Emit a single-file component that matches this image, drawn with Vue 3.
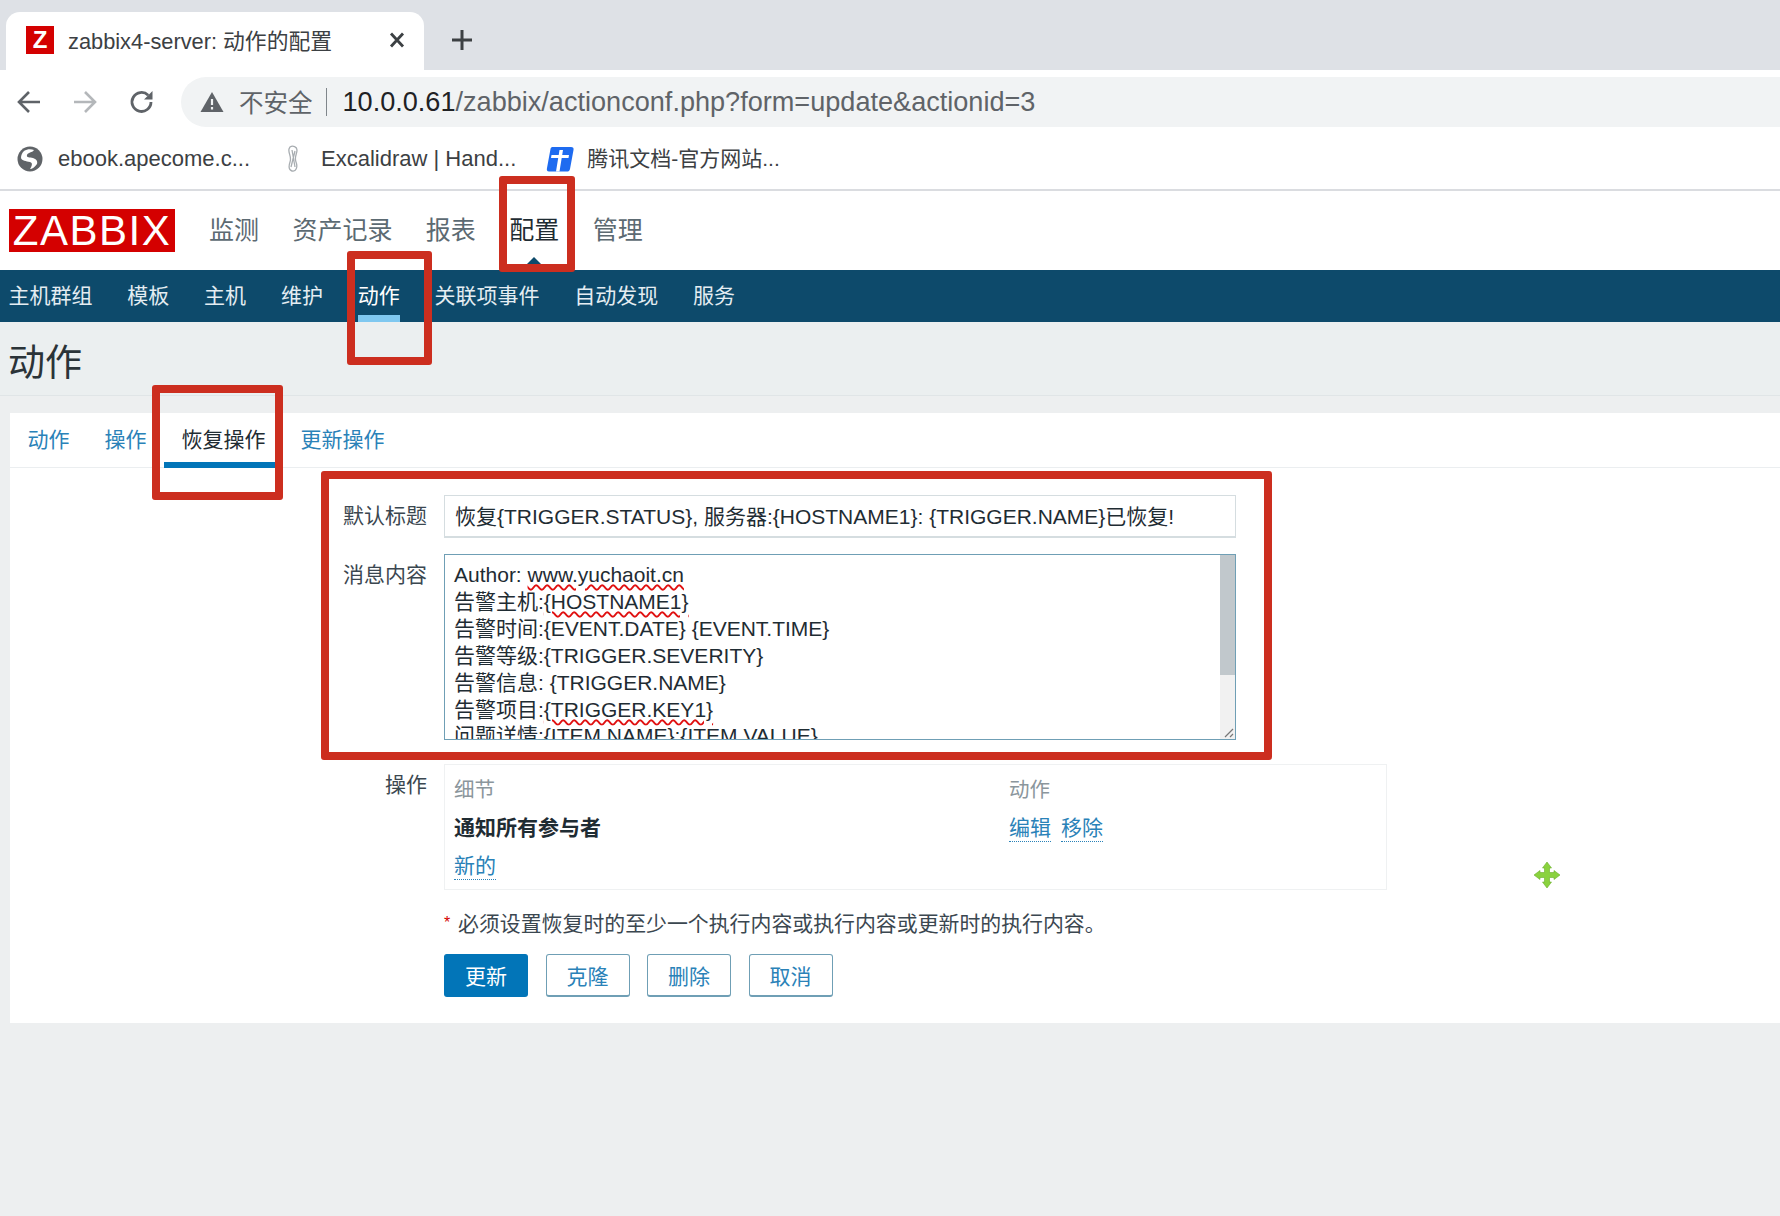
<script setup>
const topNav = ['监测', '资产记录', '报表', '配置', '管理']
const subNav = ['主机群组', '模板', '主机', '维护', '动作', '关联项事件', '自动发现', '服务']
const tabs = ['动作', '操作', '恢复操作', '更新操作']
const buttons = ['克隆', '删除', '取消']
const redBoxes = [
  { name: 'box-config' },
  { name: 'box-action' },
  { name: 'box-recovery' },
  { name: 'box-form' }
]
</script>

<template>
  <div class="page">
    <div class="tabstrip">
      <div class="tab">
        <span class="favicon">Z</span>
        <span class="tab-title">zabbix4-server: 动作的配置</span>
        <svg class="tab-close" width="18" height="18" viewBox="0 0 18 18"><path d="M3 2.500 15 15.500M15 2.500 3 15.500" stroke="#3c4043" stroke-width="2.800" fill="none" /></svg>
      </div>
      <svg class="plus" width="24" height="24" viewBox="0 0 24 24"><path d="M12 2V22M2 12H22" stroke="#3c4043" stroke-width="3" fill="none" /></svg>
    </div>

    <div class="toolbar">
      <svg class="nav-icon back" width="26" height="26" viewBox="0 0 26 26"><path d="M24 13H4M13 3 3 13 13 23" stroke="#5f6368" stroke-width="2.600" fill="none" /></svg>
      <svg class="nav-icon forward" width="26" height="26" viewBox="0 0 26 26"><path d="M2 13H22M13 3 23 13 13 23" stroke="#b4b7ba" stroke-width="2.600" fill="none" /></svg>
      <svg class="nav-icon reload" width="28" height="28" viewBox="0 0 28 28"><path d="M23 14A9.500 9.500 0 1 1 20.200 7.200" stroke="#5f6368" stroke-width="2.800" fill="none" /><path d="M24.500 3V11.500H16Z" fill="#5f6368" /></svg>
      <div class="address">
        <svg class="warn" width="24" height="22" viewBox="0 0 24 22"><path d="M12 1 23.500 21H.5Z" fill="#5f6368" /><path d="M12 8V14M12 16V18.500" stroke="#f1f3f4" stroke-width="2.200" /></svg>
        <span class="insecure">不安全</span>
        <span class="divider"></span>
        <span class="url"><span class="host">10.0.0.61</span>/zabbix/actionconf.php?form=update&amp;actionid=3</span>
      </div>
    </div>

    <div class="bookmarks">
      <div class="bookmark b1">
        <svg width="26" height="26" viewBox="0 0 26 26"><circle cx="13" cy="13" r="12.500" fill="#606468" /><path d="M7 5C10 3 14 3 17 4 15 7 11 6 10 9 9 12 13 11 16 12 19 13 21 15 20 18 18 21 15 23 13 23 15 20 16 17 13 16 9 15 5 15 4 12 4 9 5 7 7 5Z" fill="#fff" /></svg>
        <span>ebook.apecome.c...</span>
      </div>
      <div class="bookmark b2">
        <svg width="14" height="28" viewBox="0 0 14 28"><path d="M4 2C7 0 11 2 11 5 11 9 8 12 10 17 12 22 10 27 6 26 2 25 3 20 4 17 6 12 2 8 3 4ZM6 5 9 22M9 6 5 22" stroke="#a8adb1" stroke-width="1.300" fill="none" /></svg>
        <span>Excalidraw | Hand...</span>
      </div>
      <div class="bookmark b3">
        <svg width="28" height="26" viewBox="0 0 28 26"><path d="M7 1H25C27 1 28 2 27.500 4L24 23C23.600 25 22.500 25.500 21 25.500H3C1 25.500 .5 24 1 22L4.500 3C4.800 1.500 5.500 1 7 1Z" fill="#1e6bf0" /><path d="M13.500 4H17L16.200 9H23L22.500 12H15.700L13.500 25.500H10L12.200 12H5L5.500 9H12.700Z" fill="#fff" /></svg>
        <span>腾讯文档-官方网站...</span>
      </div>
    </div>

    <header class="header">
      <div class="logo">ZABBIX</div>
      <nav class="top-nav">
        <a v-for="item in topNav" :key="item" :class="{ current: item === '配置' }">{{ item }}</a>
      </nav>
      <span class="caret"></span>
    </header>

    <nav class="sub-nav">
      <a v-for="item in subNav" :key="item" :class="{ current: item === '动作' }">{{ item }}</a>
    </nav>

    <div class="title-bar"><h1>动作</h1></div>

    <main class="card">
      <div class="card-tabs">
        <a v-for="t in tabs" :key="t" :class="{ active: t === '恢复操作' }">{{ t }}</a>
      </div>

      <div class="form">
        <label>默认标题</label>
        <div class="input">恢复{TRIGGER.STATUS}, 服务器:{HOSTNAME1}: {TRIGGER.NAME}已恢复!</div>

        <label class="multi">消息内容</label>
        <div class="textarea">
          <div class="lines">
            <div>Author: <span class="squiggle">www.yuchaoit.cn</span></div>
            <div>告警主机:<span class="squiggle">{HOSTNAME1}</span></div>
            <div>告警时间:{EVENT.DATE} {EVENT.TIME}</div>
            <div>告警等级:{TRIGGER.SEVERITY}</div>
            <div>告警信息: {TRIGGER.NAME}</div>
            <div>告警项目:<span class="squiggle">{TRIGGER.KEY1}</span></div>
            <div>问题详情:{ITEM.NAME}:{ITEM.VALUE}</div>
          </div>
          <div class="scrollbar"><div class="thumb"></div></div>
          <svg class="grip" width="12" height="12" viewBox="0 0 12 12"><path d="M11 3 3 11M11 8 8 11" stroke="#777" stroke-width="1.200" fill="none" /></svg>
        </div>

        <label class="ops-label">操作</label>
        <div class="ops">
          <div class="ops-row muted"><span class="col-a">细节</span><span>动作</span></div>
          <div class="ops-row"><strong class="col-a">通知所有参与者</strong><span class="ops-links"><a>编辑</a><a>移除</a></span></div>
          <div class="ops-row third"><a>新的</a></div>
        </div>

        <div class="note"><span class="star">*</span> 必须设置恢复时的至少一个执行内容或执行内容或更新时的执行内容。</div>

        <div class="actions">
          <button class="primary">更新</button>
          <button v-for="b in buttons" :key="b">{{ b }}</button>
        </div>
      </div>
    </main>

    <div v-for="b in redBoxes" :key="b.name" class="red-box" :class="b.name"></div>

    <svg class="move-cursor" width="28" height="28" viewBox="0 0 28 28"><path d="M14 1 18.500 7H16.500V11.500H21V9.500L27 14 21 18.500V16.500H16.500V21H18.500L14 27 9.500 21H11.500V16.500H7V18.500L1 14 7 9.500V11.500H11.500V7H9.500Z" fill="#8ad23e" stroke="#6aae28" stroke-width=".6" /></svg>
  </div>
</template>

<style>
html, body { margin: 0; background: #edeff0; }
</style>

<style scoped>
.page {
  position: relative;
  width: 1780px;
  height: 1216px;
  overflow: hidden;
  background: #edeff0;
  font-family: "Liberation Sans", "Noto Sans CJK SC", sans-serif;
  color: #1f2c33;
}
a { cursor: pointer; }

.tabstrip {
  display: flex;
  align-items: center;
  height: 70px;
  padding-left: 6px;
  background: #dee1e6;
  box-sizing: border-box;
}
.tab {
  display: flex;
  align-self: flex-end;
  align-items: center;
  width: 418px;
  height: 58px;
  padding: 0 18px 3px 20px;
  box-sizing: border-box;
  background: #fff;
  border-radius: 14px 14px 0 0;
}
.favicon {
  display: flex;
  align-items: center;
  justify-content: center;
  width: 28px;
  height: 28px;
  background: #d40000;
  color: #fff;
  font: bold 24px "Liberation Sans", sans-serif;
}
.tab-title { margin-left: 14px; font-size: 21.800px; color: #3c4043; flex: 1; white-space: nowrap; }
.plus { margin: 12px 0 0 26px; transform: translateY(-1px); }

.toolbar {
  display: flex;
  align-items: center;
  height: 63px;
  background: #fff;
  padding-left: 16px;
  box-sizing: border-box;
}
.nav-icon.forward { margin-left: 30px; }
.nav-icon.reload { margin-left: 30px; }
.address {
  display: flex;
  align-items: center;
  flex: 1;
  height: 50px;
  margin-left: 25px;
  padding-left: 19px;
  border-radius: 25px 0 0 25px;
  background: #f1f3f4;
}
.insecure { margin-left: 15px; font-size: 24.500px; color: #5f6368; }
.divider { width: 1px; height: 28px; margin: 0 16px 0 13px; background: #80868b; }
.url { font-size: 27.100px; color: #5f6368; white-space: nowrap; }
.host { color: #202124; }

.bookmarks {
  display: flex;
  align-items: center;
  height: 52px;
  padding-bottom: 4px;
  background: #fff;
  border-bottom: 2px solid #dadce0;
  box-sizing: content-box;
}
.bookmark { display: flex; align-items: center; font-size: 22px; line-height: 26px; color: #3c4043; white-space: nowrap; }
.b1 { margin-left: 17px; gap: 15px; }
.b2 { margin-left: 36px; gap: 21px; }
.b3 { margin-left: 30px; gap: 13px; font-size: 21px; }

.header {
  position: relative;
  display: flex;
  align-items: center;
  height: 79px;
  background: #fff;
}
.logo {
  width: 166px;
  height: 43px;
  margin-left: 9px;
  background: #d40000;
  color: #fff;
  font-size: 42px;
  line-height: 43px;
  text-align: center;
  letter-spacing: 1.500px;
}
.top-nav {
  display: flex;
  gap: 33.400px;
  margin: 0 0 6px 34px;
  font-size: 25px;
  color: #5c6a72;
}
.top-nav .current { color: #1f2c33; }
.caret {
  position: absolute;
  left: 527px;
  bottom: 6px;
  border-left: 7px solid transparent;
  border-right: 7px solid transparent;
  border-bottom: 7px solid #0d4a6b;
}

.sub-nav {
  display: flex;
  gap: 34.800px;
  height: 52px;
  padding-left: 8.500px;
  background: #0d4a6b;
  color: #e4edf2;
  font-size: 21px;
  line-height: 52px;
  box-sizing: border-box;
}
.sub-nav a { height: 52px; box-sizing: border-box; }
.sub-nav .current { color: #fff; border-bottom: 7px solid #7fc8f0; }

.title-bar {
  height: 74px;
  padding-left: 8px;
  border-bottom: 1px solid #e0e5e7;
  background: #ebeff0;
  box-sizing: border-box;
}
.title-bar h1 {
  margin: 0;
  font-size: 37px;
  font-weight: normal;
  line-height: 84px;
  color: #2a3338;
}

.card {
  height: 610px;
  margin: 17px 0 0 10px;
  background: #fff;
}
.card-tabs {
  display: flex;
  height: 55px;
  border-bottom: 1px solid #ebeef0;
  box-sizing: border-box;
  font-size: 21px;
  color: #2a82b8;
}
.card-tabs a {
  padding: 0 17.500px;
  line-height: 54px;
  height: 55px;
  box-sizing: border-box;
}
.card-tabs .active { color: #1f2c33; border-bottom: 6px solid #0275b8; }

.form {
  display: grid;
  grid-template-columns: 417px 792px;
  column-gap: 17px;
  padding-top: 27px;
  font-size: 21px;
}
label { text-align: right; font-size: 21px; color: #3b4750; line-height: 42px; }
.input {
  height: 43px;
  padding: 0 10px;
  line-height: 42px;
  border: 1px solid #d5dde0;
  border-bottom-width: 2px;
  box-sizing: border-box;
  white-space: nowrap;
}
.textarea {
  position: relative;
  height: 186px;
  margin-top: 16px;
  border: 1px solid #6f9fb5;
  box-sizing: border-box;
  overflow: hidden;
}
.form .multi { margin-top: 16px; }
.lines { padding: 7px 0 0 9px; line-height: 26.900px; white-space: nowrap; }
.squiggle { text-decoration: underline wavy #e01010 1.500px; text-underline-offset: 2px; }
.scrollbar { position: absolute; top: 0; right: 0; bottom: 0; width: 15px; background: #f1f1f1; }
.thumb { height: 120px; background: #c1c8cc; }
.grip { position: absolute; right: 1px; bottom: 1px; background: #f1f1f1; }

.ops-label { margin-top: 24px; }
.ops {
  width: 943px;
  height: 126px;
  margin-top: 24px;
  padding: 4px 9px 0;
  border: 1px solid #eff1f2;
  box-sizing: border-box;
  font-size: 21px;
}
.ops-row { display: flex; height: 38px; align-items: center; color: #1f2c33; }
.third { margin-top: 2px; }
.col-a { width: 555px; }
.muted { color: #8b969c; font-size: 20.500px; }
.ops a { color: #2a82b8; border-bottom: 1px dotted #2a82b8; line-height: 26px; }
.ops-links { display: flex; gap: 10px; margin-top: 4px; }

.note { grid-column: 2; width: 943px; margin-top: 20px; height: 26px; line-height: 26px; font-size: 20.900px; color: #3b4750; white-space: nowrap; }
.star { color: #d40000; font-size: 16px; vertical-align: 3px; margin-right: 2px; }

.actions { grid-column: 2; display: flex; gap: 17.500px; margin-top: 18px; }
button {
  width: 84px;
  height: 43px;
  padding: 0;
  border: 1px solid #6f9fb5;
  border-bottom-width: 2px;
  border-radius: 3px;
  background: #fff;
  color: #2a82b8;
  font: 21px "Liberation Sans", "Noto Sans CJK SC", sans-serif;
}
button.primary { background: #0275b8; border-color: #0275b8; color: #fff; }

.red-box {
  position: absolute;
  box-sizing: border-box;
  border: 8px solid #cc2e1f;
  border-radius: 3px;
  pointer-events: none;
}
.box-config { left: 499px; top: 176px; width: 76px; height: 96px; }
.box-action { left: 347px; top: 251px; width: 85px; height: 114px; }
.box-recovery { left: 152px; top: 385px; width: 131px; height: 115px; }
.box-form { left: 321px; top: 471px; width: 951px; height: 289px; }

.move-cursor { position: absolute; left: 1533px; top: 861px; }
</style>
